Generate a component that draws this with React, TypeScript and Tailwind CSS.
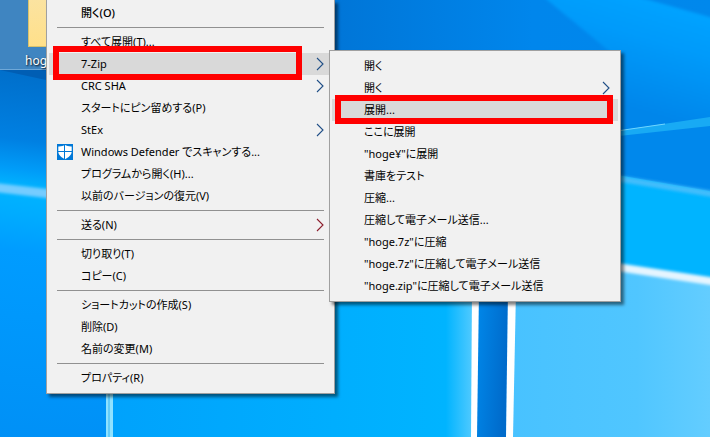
import { ReactNode } from "react";

type Entry = {
  label?: string;
  sub?: boolean;
  bold?: boolean;
  active?: boolean;
  icon?: ReactNode;
  mark?: ReactNode;
};

function Shield() {
  return (
    <svg viewBox="0 0 16 16" className="size-4" aria-hidden="true">
      <rect width="16" height="16" fill="#0078d7" />
      <path d="M8 1C6.500 2 4 2.500 1.300 2.400V7.500C1.300 11 4.500 13.600 8 15.200C11.500 13.600 14.700 11 14.700 7.500V2.400C12 2.500 9.500 2 8 1Z" fill="#fff" />
      <path d="M7.500 1V15.500M1 7.500H15" stroke="#0078d7" strokeWidth="1" />
    </svg>
  );
}

function Chevron({ color }: { color: string }) {
  return (
    <svg viewBox="0 0 8 14" className="h-3.5 w-2" fill="none" stroke={color} strokeWidth="1.1" aria-hidden="true">
      <path d="M1 1L7 7L1 13" />
    </svg>
  );
}

function MenuList({ entries }: { entries: Entry[] }) {
  return (
    <ul role="menu">
      {entries.map((e, i) =>
        e.label ? (
          <li key={i} role="none" className="relative px-0.5">
            <button
              type="button"
              role="menuitem"
              className={`flex h-[22px] w-full items-center px-2 text-left whitespace-nowrap ${e.active ? "bg-[#d9d9d9]" : ""} ${e.bold ? "font-medium" : ""}`}
            >
              <span className="w-6 shrink-0">{e.icon}</span>
              <span className="grow">{e.label}</span>
              {e.sub && <Chevron color={e.label.startsWith("送る") ? "#8c1d2c" : "#1f4e86"} />}
            </button>
            {e.mark}
          </li>
        ) : (
          <li key={i} role="separator" className="flex h-[7px] items-center px-2.5">
            <span className="h-px w-full bg-[#919191]" />
          </li>
        ),
      )}
    </ul>
  );
}

const mainEntries: Entry[] = [
  { label: "開く(O)", bold: true },
  {},
  { label: "すべて展開(T)..." },
  {
    label: "7-Zip",
    sub: true,
    active: true,
    mark: <span className="pointer-events-none absolute -top-[7px] -bottom-[5px] left-1.5 right-8 border-6 border-[#ff0000]" />,
  },
  { label: "CRC SHA", sub: true },
  { label: "スタートにピン留めする(P)" },
  { label: "StEx", sub: true },
  { label: "Windows Defender でスキャンする...", icon: <Shield /> },
  { label: "プログラムから開く(H)..." },
  { label: "以前のバージョンの復元(V)" },
  {},
  { label: "送る(N)", sub: true },
  {},
  { label: "切り取り(T)" },
  { label: "コピー(C)" },
  {},
  { label: "ショートカットの作成(S)" },
  { label: "削除(D)" },
  { label: "名前の変更(M)" },
  {},
  { label: "プロパティ(R)" },
];

const zipEntries: Entry[] = [
  { label: "開く" },
  { label: "開く", sub: true },
  {
    label: "展開...",
    active: true,
    mark: <span className="pointer-events-none absolute -top-1 -bottom-[3px] left-[5px] right-[7px] border-6 border-[#ff0000]" />,
  },
  { label: "ここに展開" },
  { label: '"hoge¥"に展開' },
  { label: "書庫をテスト" },
  { label: "圧縮..." },
  { label: "圧縮して電子メール送信..." },
  { label: '"hoge.7z"に圧縮' },
  { label: '"hoge.7z"に圧縮して電子メール送信' },
  { label: '"hoge.zip"に圧縮して電子メール送信' },
];

function Wallpaper() {
  return (
    <svg viewBox="0 0 710 437" preserveAspectRatio="none" className="absolute inset-0 size-full" aria-hidden="true">
      <defs>
        <linearGradient id="sky" x1="0" y1="0" x2="1" y2="0">
          <stop offset="0" stopColor="#0078d8" />
          <stop offset="0.48" stopColor="#0076d8" />
          <stop offset="0.75" stopColor="#0086ec" />
          <stop offset="1" stopColor="#0088ec" />
        </linearGradient>
        <linearGradient id="ray" gradientUnits="userSpaceOnUse" x1="670" y1="8" x2="640" y2="110">
          <stop offset="0" stopColor="#00a2ff" />
          <stop offset="0.35" stopColor="#009afa" />
          <stop offset="1" stopColor="#0086ea" />
        </linearGradient>
        <linearGradient id="left" gradientUnits="userSpaceOnUse" x1="0" y1="70" x2="-45" y2="437">
          <stop offset="0" stopColor="#006fcb" />
          <stop offset="0.18" stopColor="#0080e2" />
          <stop offset="0.26" stopColor="#009cf8" />
          <stop offset="0.31" stopColor="#00b4ff" />
          <stop offset="0.38" stopColor="#00acff" />
          <stop offset="0.48" stopColor="#009cff" />
          <stop offset="1" stopColor="#0090f6" />
        </linearGradient>
        <linearGradient id="floor" x1="0" y1="0" x2="1" y2="0">
          <stop offset="0" stopColor="#00a2fc" />
          <stop offset="0.92" stopColor="#00b4ff" />
          <stop offset="1" stopColor="#58ccff" />
        </linearGradient>
        <linearGradient id="bar" x1="0" y1="0" x2="1" y2="0.3">
          <stop offset="0" stopColor="#0088ea" />
          <stop offset="1" stopColor="#006bcb" />
        </linearGradient>
        <linearGradient id="pane" x1="0" y1="0" x2="1" y2="0">
          <stop offset="0" stopColor="#48c2ff" />
          <stop offset="0.6" stopColor="#50c6ff" />
          <stop offset="1" stopColor="#66ceff" />
        </linearGradient>
        <filter id="soft" x="-20%" y="-100%" width="140%" height="300%">
          <feGaussianBlur stdDeviation="1.5" />
        </filter>
      </defs>
      <rect width="710" height="437" fill="url(#sky)" />
      <path d="M540 -6H628L720 20V130H620V60Z" fill="url(#ray)" filter="url(#soft)" />
      <path d="M610 134L710 120V200L610 180Z" fill="#0088ec" />
      <path d="M610 132L710 117V126L610 137Z" fill="#18aaf4" />
      <path d="M610 132L665 124" stroke="#6fd6ff" strokeWidth="1" />
      <path d="M600 172L720 193V300H600Z" fill="#00b4ff" />
      <path d="M590 174L730 197" stroke="#42bdfc" strokeWidth="6" filter="url(#soft)" />
      <rect y="65" width="110" height="372" fill="url(#left)" />
      <path d="M0 70L46 80V70Z" fill="#005eb4" />
      <path d="M-10 187L60 195" stroke="#74ccff" strokeWidth="9" filter="url(#soft)" />
      <rect x="110" y="290" width="365" height="147" fill="url(#floor)" />
      <path d="M512 290L600 264L720 281V437H512Z" fill="url(#pane)" />
      <path d="M590 263L730 284" stroke="#e5f5ff" strokeWidth="8" filter="url(#soft)" />
      <path d="M478 290H508L506 437H477Z" fill="url(#bar)" />
      <path d="M472 290H479L477 437H471Z" fill="#fff" />
      <path d="M508 290H516L513 437H506Z" fill="#fff" />
      <path d="M106 390H113V437H106Z" fill="#8fe2ff" />
      <path d="M109 390V437" stroke="#37b5f5" />
    </svg>
  );
}

export default function App() {
  return (
    <main
      lang="ja"
      className="relative min-h-screen overflow-hidden bg-[#0078d7] font-['Noto_Sans','Noto_Sans_CJK_JP',sans-serif] text-[11px] text-black [font-feature-settings:'palt']"
    >
      <Wallpaper />
      <div className="absolute top-0 left-0 flex h-[70px] w-20 flex-col items-start border-b border-[#6fa8d8] bg-[#3f85c1] pl-[25px]">
        <span className="ml-[3px] h-[47px] w-12 border-b border-l border-[#d9c26c] bg-linear-to-b from-[#fbe3a0] to-[#ffe08a]" />
        <span className="mt-1.5 text-xs leading-4 text-white [text-shadow:1px_1px_2px_#000]">hoge</span>
      </div>
      <nav
        aria-label="コンテキスト メニュー"
        className="absolute top-0 left-[46px] w-[289px] border-x border-b border-[#a0a0a0] bg-[#f1f1f1] pt-0.5 pb-1 shadow-[3px_3px_3px_rgba(0,0,0,0.5)]"
      >
        <MenuList entries={mainEntries} />
      </nav>
      <nav
        aria-label="7-Zip"
        className="absolute top-[50px] left-[329px] w-[292px] border border-[#a0a0a0] bg-[#f1f1f1] py-1 shadow-[3px_3px_3px_rgba(0,0,0,0.5)]"
      >
        <MenuList entries={zipEntries} />
      </nav>
    </main>
  );
}
